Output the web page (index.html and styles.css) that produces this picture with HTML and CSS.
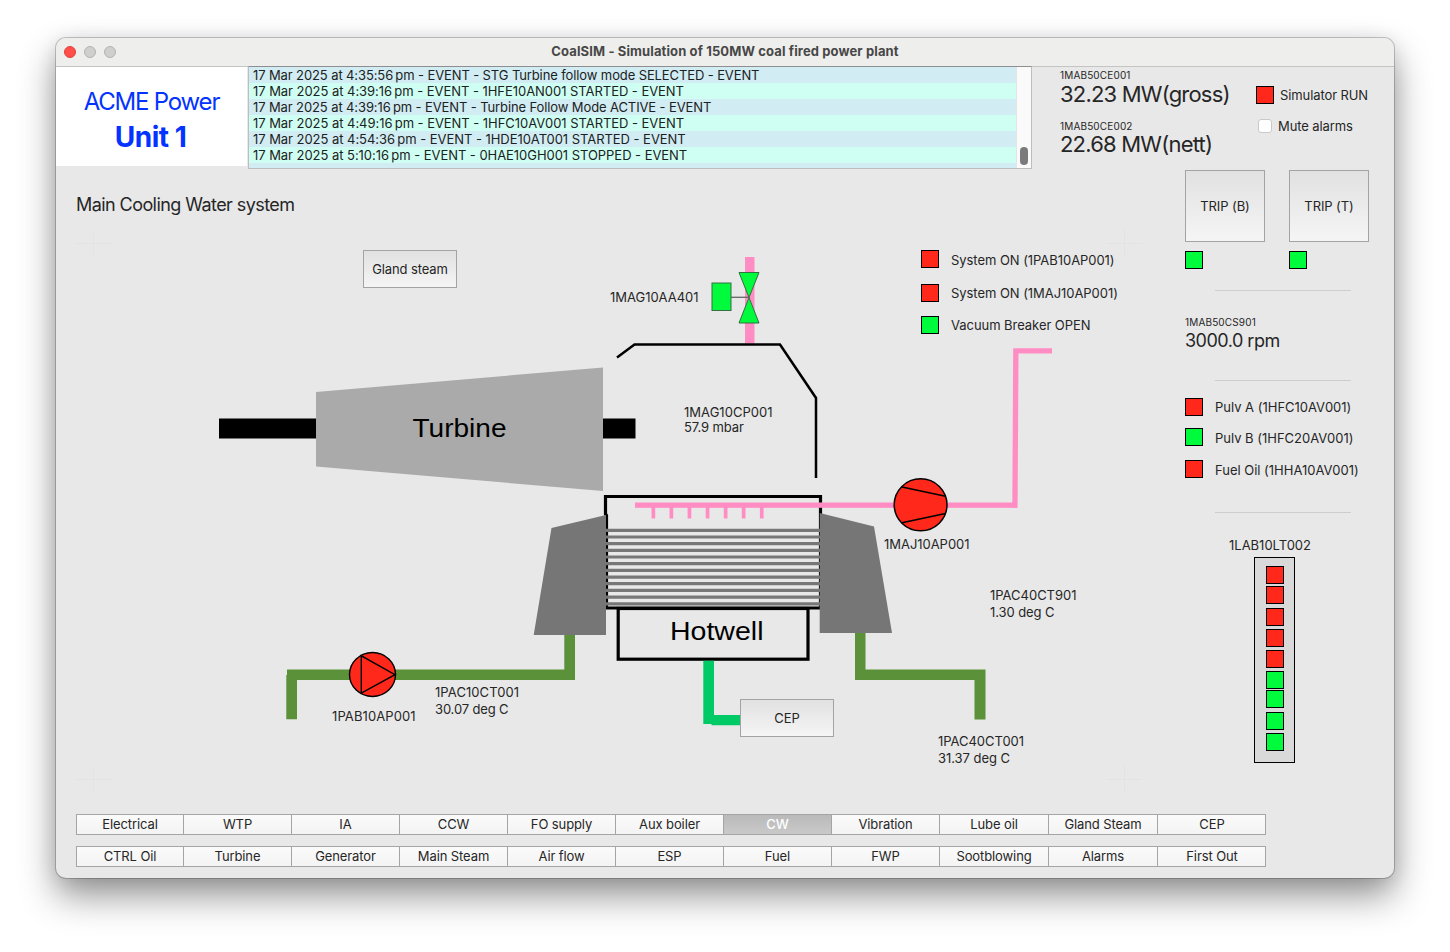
FILE: index.html
```html
<!DOCTYPE html>
<html lang="en">
<head>
<meta charset="utf-8">
<title>CoalSIM - Simulation of 150MW coal fired power plant</title>
<link rel="stylesheet" href="styles.css">
</head>
<body>
<div class="window">
  <header class="titlebar">
    <div class="lights"><span class="light light-close"></span><span class="light"></span><span class="light"></span></div>
    <h1 class="window-title">CoalSIM - Simulation of 150MW coal fired power plant</h1>
  </header>

  <section class="top">
    <div class="brand">
      <div class="brand-name">ACME Power</div>
      <div class="brand-unit">Unit 1</div>
    </div>
    <div class="log">
      <ul class="log-rows">
        <li class="mode">17 Mar 2025 at 4:35:56&#8201;pm - EVENT - STG Turbine follow mode SELECTED - EVENT</li>
        <li>17 Mar 2025 at 4:39:16&#8201;pm - EVENT - 1HFE10AN001 STARTED - EVENT</li>
        <li class="mode">17 Mar 2025 at 4:39:16&#8201;pm - EVENT - Turbine Follow Mode ACTIVE - EVENT</li>
        <li>17 Mar 2025 at 4:49:16&#8201;pm - EVENT - 1HFC10AV001 STARTED - EVENT</li>
        <li>17 Mar 2025 at 4:54:36&#8201;pm - EVENT - 1HDE10AT001 STARTED - EVENT</li>
        <li>17 Mar 2025 at 5:10:16&#8201;pm - EVENT - 0HAE10GH001 STOPPED - EVENT</li>
        <li></li>
      </ul>
      <div class="scrollbar"><span class="thumb"></span></div>
    </div>
    <div class="readouts">
      <div class="tag">1MAB50CE001</div>
      <div class="power">32.23 MW(gross)</div>
      <div class="tag tag-second">1MAB50CE002</div>
      <div class="power">22.68 MW(nett)</div>
    </div>
    <div class="sim">
      <div class="sim-row"><span class="lamp red"></span><span class="sim-text">Simulator RUN</span></div>
      <label class="sim-row mute"><span class="checkbox"></span><span class="sim-text">Mute alarms</span></label>
    </div>
  </section>

  <div class="body">
    <main class="main">
      <h2 class="page-title">Main Cooling Water system</h2>
      <div class="canvas">
        <svg class="diagram" width="1109" height="576" viewBox="76 224 1109 576">
          <g class="marks">
            <path d="M76 243.500h36M93.500 230v27M1107 243.500h36M1124.500 230v27M76 779.500h36M93.500 766v27M1106 779.500h36M1124.500 766v27"/>
          </g>
          <g class="steam">
            <rect x="745" y="257" width="9.500" height="86.500"/>
          </g>
          <g class="valve">
            <path class="stem" d="M731 297.300H749"/>
            <rect x="712" y="283" width="19" height="27.500"/>
            <path d="M739 272.500H759L749 297.500ZM739 323H759L749 297.500Z"/>
          </g>
          <path class="shell" d="M617 357.500L634.500 344.600H780L816 398V478"/>
          <rect x="219" y="418.500" width="416.500" height="20"/>
          <path class="turbine" d="M316 392L603 367.500V491L316 466.500Z"/>
          <text class="big" x="412.500" y="437" textLength="94" lengthAdjust="spacingAndGlyphs">Turbine</text>

          <path class="box" d="M605.500 496.500H820.500V608H606.500V515.500L605.500 514Z"/>
          <rect class="box" x="618.200" y="608.500" width="189.800" height="50.700"/>
          <text class="big" x="670" y="640" textLength="93.500" lengthAdjust="spacingAndGlyphs">Hotwell</text>
          <path class="tubes" d="M605 530.3H820M605 537H820M605 543.700H820M605 550.400H820M605 557H820M605 563.700H820M605 570.400H820M605 577.100H820M605 583.700H820M605 590.400H820M605 597.100H820M605 603.800H820"/>
          <g class="waterbox">
            <path d="M606 515L551.500 528L533.700 635H606Z"/>
            <path d="M819.700 513L874 526.500L892 633H819.700Z"/>
          </g>
          <g class="steam">
            <rect x="635" y="502.500" width="382" height="5.300"/>
            <path d="M1013.200 348.200H1052V353.600H1018.500L1017.600 507.800H1012.300Z"/>
            <path d="M651.500 507h3.700v11.500h-3.700zM669.500 507h3.700v11.500h-3.700zM687.600 507h3.700v11.500h-3.700zM705.700 507h3.700v11.500h-3.700zM723.800 507h3.700v11.500h-3.700zM741.800 507h3.700v11.500h-3.700zM759.900 507h3.700v11.500h-3.700z"/>
          </g>
          <g class="water">
            <path d="M564.300 635H575V680H297V719.300H286.300V675H287V669.600H564.300Z"/>
            <path d="M855 633H865.500V669.600H985.500V719.500H974.500V680H855Z"/>
          </g>
          <path class="condensate" d="M703.300 660.800H714V715H741V725.300H711.500V724H703.300Z"/>
          <g class="machine">
            <ellipse cx="920.600" cy="504.800" rx="26.400" ry="26"/>
            <path d="M902 487L945.500 496.200M902 522.700L945.500 513.500"/>
          </g>
          <g class="machine pump">
            <ellipse cx="372.500" cy="674.500" rx="23" ry="22"/>
            <path d="M361.300 655.800V693L395 674.700Z"/>
          </g>
          <g class="labels">
            <text x="610" y="302" textLength="88.500">1MAG10AA401</text>
            <text x="684" y="417.300" textLength="88.500">1MAG10CP001</text>
            <text x="684" y="432" textLength="60">57.9 mbar</text>
            <text x="884" y="549" textLength="85.500">1MAJ10AP001</text>
            <text x="990" y="600" textLength="86.500">1PAC40CT901</text>
            <text x="990" y="617" textLength="64.500">1.30 deg C</text>
            <text x="332" y="721" textLength="83.500">1PAB10AP001</text>
            <text x="435" y="697" textLength="84">1PAC10CT001</text>
            <text x="435" y="714" textLength="73.500">30.07 deg C</text>
            <text x="938" y="746" textLength="86">1PAC40CT001</text>
            <text x="938" y="763" textLength="72">31.37 deg C</text>
          </g>
        </svg>
        <button class="push gland">Gland steam</button>
        <button class="push cep">CEP</button>
        <ul class="legend">
          <li><span class="lamp red"></span><span class="first-label">System ON (1PAB10AP001)</span></li>
          <li><span class="lamp red"></span><span>System ON (1MAJ10AP001)</span></li>
          <li><span class="lamp green"></span><span>Vacuum Breaker OPEN</span></li>
        </ul>
      </div>
    </main>

    <aside class="side">
      <div class="trips">
        <div class="trip"><button class="push">TRIP (B)</button><span class="lamp green"></span></div>
        <div class="trip"><button class="push">TRIP (T)</button><span class="lamp green"></span></div>
      </div>
      <hr class="rule">
      <div class="tag speed-tag">1MAB50CS901</div>
      <div class="speed">3000.0 rpm</div>
      <hr class="rule rule-speed">
      <ul class="fuel">
        <li><span class="lamp red"></span><span>Pulv A (1HFC10AV001)</span></li>
        <li><span class="lamp green"></span><span>Pulv B (1HFC20AV001)</span></li>
        <li><span class="lamp red"></span><span>Fuel Oil (1HHA10AV001)</span></li>
      </ul>
      <hr class="rule rule-fuel">
      <div class="level-tag">1LAB10LT002</div>
      <div class="level">
        <span class="lamp red"></span><span class="lamp red tight"></span><span class="lamp red loose"></span><span class="lamp red"></span><span class="lamp red"></span><span class="lamp green"></span><span class="lamp green tightest"></span><span class="lamp green loose"></span><span class="lamp green"></span>
      </div>
    </aside>
  </div>

  <nav class="tabs">
    <div class="tab-row">
      <a>Electrical</a><a>WTP</a><a>IA</a><a>CCW</a><a>FO supply</a><a>Aux boiler</a><a class="active">CW</a><a>Vibration</a><a>Lube oil</a><a>Gland Steam</a><a>CEP</a>
    </div>
    <div class="tab-row">
      <a>CTRL Oil</a><a>Turbine</a><a>Generator</a><a>Main Steam</a><a>Air flow</a><a>ESP</a><a>Fuel</a><a>FWP</a><a>Sootblowing</a><a>Alarms</a><a>First Out</a>
    </div>
  </nav>
</div>
</body>
</html>
```
FILE: styles.css
```css
* { box-sizing: border-box; }

body {
  margin: 0;
  padding: 38px 56px 0;
  height: 952px;
  overflow: hidden;
  background: #fff;
  color: #262626;
  font: 13px/16px Inter, "Liberation Sans", sans-serif;
  letter-spacing: -0.1px;
}

ul { list-style: none; margin: 0; padding: 0; }

.window {
  width: 1338px;
  height: 840px;
  border-radius: 10px;
  overflow: hidden;
  background: #e8e8e8;
  box-shadow: 0 0 0 1px rgba(0, 0, 0, .2), 0 18px 36px rgba(0, 0, 0, .42), 0 2px 20px rgba(0, 0, 0, .1);
  display: flex;
  flex-direction: column;
}

/* Title bar */
.titlebar {
  height: 29px;
  flex: none;
  display: grid;
  grid-template-columns: 80px 1fr 80px;
  align-items: center;
  background: #eeeeec;
  border-bottom: 1px solid #c4c4c3;
}
.lights { display: flex; gap: 8px; padding-left: 8px; }
.light { width: 12px; height: 12px; border-radius: 50%; background: #cfcfcd; border: 1px solid #b3b3b1; }
.light-close { background: #fe4f4b; border-color: #e0403c; }
.window-title { margin: 0; padding-bottom: 2px; text-align: center; font-size: 13px; font-weight: 700; letter-spacing: 0.12px; color: #474747; }

/* Top strip */
.top { height: 102px; flex: none; display: flex; }
.brand { width: 191px; height: 99px; background: #fff; color: #0433ff; text-align: center; padding-top: 20px; }
.brand-name { font-size: 24px; line-height: 30px; letter-spacing: -1.2px; }
.brand-unit { font-size: 28px; line-height: 34px; font-weight: 700; letter-spacing: -0.5px; padding: 3px 2px 0 0; }
.log { width: 784px; height: 103px; margin: -1px 0 0 1px; border: 1px solid #bdbdbd; border-top-color: #8e8e8e; display: flex; overflow: hidden; }
.log-rows { flex: 1; }
.log-rows li { height: 16px; padding-left: 4px; background: #d1ecf3; white-space: nowrap; color: #1c2222; letter-spacing: -0.045px; }
.log-rows .mode { letter-spacing: -0.11px; }
.log-rows li:nth-child(even) { background: #cffff2; }
.scrollbar { width: 15px; background: #fafafa; border-left: 1px solid #e4e4e4; padding: 80px 0 0 3px; }
.thumb { display: block; width: 8px; height: 18px; border-radius: 4px; background: #7b7b7b; }
.readouts { width: 224px; padding: 2px 0 0 28px; white-space: nowrap; }
.tag { font-size: 10px; line-height: 12px; letter-spacing: 0.15px; }
.tag-second { padding-top: 13px; }
.power { font-size: 22px; line-height: 26px; letter-spacing: -0.8px; }
.tag-second + .power { line-height: 24px; }
.sim { padding-top: 19px; white-space: nowrap; }
.sim-row { display: flex; align-items: center; gap: 6px; height: 18px; }
.sim-text { padding-bottom: 1px; }
.mute { margin: 13px 0 0 2px; }
.checkbox { width: 14px; height: 14px; border-radius: 3px; border: 1px solid #c9c9c9; background: #fff; }

.lamp { display: block; flex: none; width: 18px; height: 18px; border: 1px solid #000; }
.red { background: #ff281a; }
.green { background: #00fb3c; }

/* Body */
.body { flex: 1; display: grid; grid-template-columns: 1129px 1fr; min-height: 0; }
.main { padding-left: 20px; }
.page-title { margin: 0; height: 55px; padding-top: 25px; font-size: 18px; line-height: 22px; font-weight: 400; letter-spacing: -0.57px; }
.canvas { position: relative; height: 576px; }
.diagram { display: block; }
.push {
  border: 1px solid #a3a3a3;
  background: linear-gradient(#e1e1e1, #f5f5f5);
  font: inherit;
  letter-spacing: inherit;
  color: #262626;
  padding: 0;
}
.gland { position: absolute; left: 287px; top: 26px; width: 94px; height: 38px; }
.cep { position: absolute; left: 664px; top: 475px; width: 94px; height: 38px; }
.legend { position: absolute; left: 845px; top: 25px; display: grid; grid-template-rows: 34px 32px 18px; letter-spacing: -0.05px; }
.legend li { display: flex; align-items: center; gap: 12px; height: 20px; }
.legend li:nth-child(n+2) span:last-child { padding-bottom: 1px; }
.legend .first-label { padding-top: 2px; }

.marks { fill: none; stroke: #e3e3e3; }
.steam { fill: #ff8cc3; }
.valve { fill: #00fb3c; stroke: #356f45; }
.valve .stem { stroke: #666; stroke-width: 1.300; }
.shell { fill: none; stroke: #000; stroke-width: 2.500; }
.turbine { fill: #aaa; }
.big { font: 25px "Liberation Sans", Arial, sans-serif; fill: #000; letter-spacing: 0; }
.box { fill: none; stroke: #000; stroke-width: 3.200; }
.tubes { fill: none; stroke: #777; stroke-width: 3.200; }
.waterbox { fill: #767676; }
.water { fill: #5a9139; }
.condensate { fill: #00ca66; }
.machine { fill: #ff281a; stroke: #000; stroke-width: 1.500; }
.pump { stroke-width: 1.400; }
.labels { fill: #262626; letter-spacing: 0; }

/* Right side panel */
.side { padding-top: 1px; }
.trips { display: flex; gap: 24px; }
.trip .push { display: block; width: 80px; height: 72px; }
.trip .lamp { margin-top: 9px; }
.rule { width: 136px; height: 1px; margin: 21px 0 0 30px; border: 0; background: #cdcdcd; }
.speed-tag { margin-top: 25px; }
.speed { font-size: 18px; line-height: 22px; letter-spacing: -0.5px; margin-top: 2px; }
.rule-speed { margin-top: 28px; }
.fuel { padding-top: 17px; display: grid; grid-template-rows: 30px 32px 20px; height: 99px; align-content: start; white-space: nowrap; letter-spacing: -0.01px; }
.fuel li { display: flex; gap: 12px; height: 18px; align-items: center; }
.fuel li:nth-child(n+2) span:last-child { padding-top: 2px; }
.rule-fuel { margin-top: 32px; }
.level-tag { margin: 24px 0 0 44px; letter-spacing: 0; }
.level { width: 41px; height: 206px; margin: 4px 0 0 69px; border: 1px solid #000; background: #d9d9d9; padding: 8px 0 0 11px; }
.level .lamp + .lamp { margin-top: 3px; }
.level .lamp.tight { margin-top: 2px; }
.level .lamp.tightest { margin-top: 1px; }
.level .lamp.loose { margin-top: 4px; }

/* Navigation */
.tabs { flex: none; height: 64px; padding-left: 20px; display: flex; flex-direction: column; gap: 11px; }
.tab-row { width: 1190px; height: 21px; display: grid; grid-template-columns: 107px repeat(7, 108px) repeat(3, 109px); background: linear-gradient(#fbfbfb, #f3f3f3); border-right: 1px solid #a5a5a5; }
.tab-row a { border: 1px solid #a5a5a5; border-right: 0; text-align: center; line-height: 19px; height: 21px; }
.tab-row .active { background: linear-gradient(#bababa, #c9c9c9); color: #fff; font-weight: 500; }
```
